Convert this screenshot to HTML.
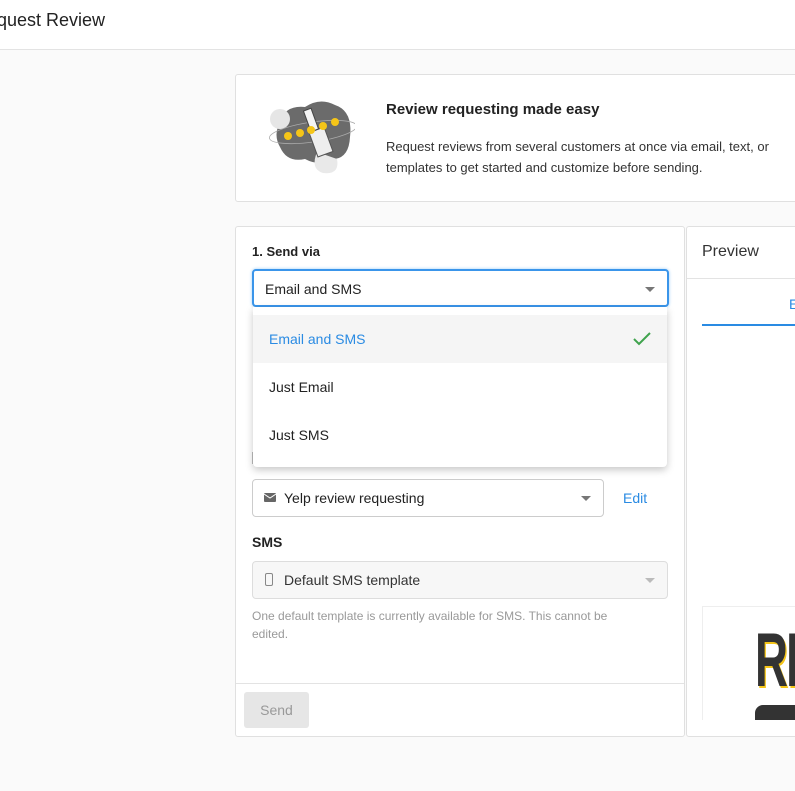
<!DOCTYPE html>
<html><head><meta charset="utf-8"><style>
*{box-sizing:border-box;margin:0;padding:0}
body{width:795px;height:791px;overflow:hidden;background:#fafafa;font-family:"Liberation Sans",sans-serif;color:#222;position:relative}
.hdr{position:absolute;left:0;top:0;width:795px;height:50px;background:#fff;border-bottom:1px solid #e3e3e3}
.hdr span{position:absolute;left:-3px;top:10px;font-size:18px;color:#222}
.card{position:absolute;background:#fff;border:1px solid #e0e0e0;border-radius:3px}
.abs{position:absolute}
.sel{position:absolute;border:1px solid #ccc;border-radius:4px;background:#fff;font-size:14px}
.caret{position:absolute;width:0;height:0;border-left:5px solid transparent;border-right:5px solid transparent;border-top:5px solid #777}
</style></head><body>
<div class="hdr"><span>quest Review</span></div>

<div class="card" style="left:235px;top:74px;width:580px;height:128px"></div>
<svg class="abs" style="left:265px;top:97px" width="90" height="82" viewBox="0 0 90 82">
<path d="M15 25 Q20 8 40 10 Q55 0 70 8 Q88 14 85 40 Q84 60 70 62 Q55 70 40 62 Q22 66 15 50 Q8 38 15 25Z" fill="#6b6b6b"/>
<circle cx="15" cy="22" r="10" fill="#e6e6e6"/>
<ellipse cx="48" cy="35" rx="44" ry="10" fill="none" stroke="#aaa" stroke-width="0.8" transform="rotate(-8 48 35)"/>
<path d="M52 55 Q45 72 58 76 Q75 78 72 62Z" fill="#e9e9e9"/>
<rect x="48" y="32" width="16" height="26" fill="#eee" stroke="#555" stroke-width="1" transform="rotate(-20 56 45)"/>
<rect x="42" y="12" width="8" height="22" fill="#f4f4f4" stroke="#444" stroke-width="1" transform="rotate(-20 46 23)"/>
<g fill="#f5c518"><circle cx="23" cy="39" r="4"/><circle cx="35" cy="36" r="4"/><circle cx="46" cy="33" r="4"/><circle cx="58" cy="29" r="4"/><circle cx="70" cy="25" r="4"/></g>
</svg>
<div class="abs" style="left:386px;top:101px;font-size:15px;font-weight:bold;color:#222">Review requesting made easy</div>
<div class="abs" style="left:386px;top:136px;font-size:13px;line-height:21px;color:#333;white-space:nowrap">Request reviews from several customers at once via email, text, or<br>templates to get started and customize before sending.</div>

<div class="card" style="left:235px;top:226px;width:450px;height:511px"></div>
<div class="abs" style="left:252px;top:244px;font-size:13px;font-weight:bold">1. Send via</div>
<div class="sel" style="left:252px;top:269px;width:417px;height:38px;border:2px solid #3a95ea;box-shadow:0 0 3px #9cccf5"><span class="abs" style="left:11px;top:10px">Email and SMS</span><div class="caret" style="left:391px;top:16px"></div></div>
<div class="abs" style="left:252px;top:332px;font-size:13px">:</div>
<div class="abs" style="left:252px;top:428px;font-size:13px">:</div>
<div class="abs" style="left:252px;top:452px;width:1px;height:12px;background:#bbb"></div>

<div class="abs" style="left:253px;top:307px;width:414px;height:160px;background:#fff;border-radius:0 0 4px 4px;box-shadow:0 3px 8px rgba(0,0,0,0.22)">
<div class="abs" style="left:0;top:8px;width:414px;height:48px;background:#f5f5f5"></div>
<div class="abs" style="left:16px;top:24px;font-size:14px;color:#2a8be3">Email and SMS</div>
<svg class="abs" style="left:379px;top:24px" width="20" height="16"><path d="M2 8 L7 13 L18 2" fill="none" stroke="#3fa34d" stroke-width="2"/></svg>
<div class="abs" style="left:16px;top:72px;font-size:14px">Just Email</div>
<div class="abs" style="left:16px;top:120px;font-size:14px">Just SMS</div>
</div>

<div class="sel" style="left:252px;top:479px;width:352px;height:38px"><svg class="abs" style="left:11px;top:13px" width="12" height="9"><rect width="12" height="9" rx="1" fill="#666"/><path d="M0 1 L6 5 L12 1" fill="none" stroke="#fff" stroke-width="1"/></svg><span class="abs" style="left:31px;top:10px">Yelp review requesting</span><div class="caret" style="left:328px;top:16px"></div></div>
<div class="abs" style="left:623px;top:490px;font-size:14px;color:#2a8be3">Edit</div>
<div class="abs" style="left:252px;top:534px;font-size:14px;font-weight:bold">SMS</div>
<div class="sel" style="left:252px;top:561px;width:416px;height:38px;background:#f7f7f7;border-color:#ddd"><svg class="abs" style="left:12px;top:11px" width="8" height="13"><rect x="0.5" y="0.5" width="7" height="12" rx="1.5" fill="none" stroke="#888"/></svg><span class="abs" style="left:31px;top:10px;color:#333">Default SMS template</span><div class="caret" style="left:392px;top:16px;border-top-color:#bbb"></div></div>
<div class="abs" style="left:252px;top:607px;font-size:12px;line-height:18px;color:#999;width:385px">One default template is currently available for SMS. This cannot be edited.</div>
<div class="abs" style="left:236px;top:683px;width:448px;height:1px;background:#e3e3e3"></div>
<div class="abs" style="left:244px;top:692px;width:65px;height:36px;background:#e6e6e6;border-radius:3px;color:#999;font-size:14px;text-align:center;line-height:36px">Send</div>

<div class="card" style="left:686px;top:226px;width:130px;height:511px"></div>
<div class="abs" style="left:702px;top:243px;font-size:16px;color:#333">Preview</div>
<div class="abs" style="left:687px;top:278px;width:108px;height:1px;background:#e3e3e3"></div>
<div class="abs" style="left:789px;top:296px;font-size:14px;color:#2a8be3">E</div>
<div class="abs" style="left:702px;top:324px;width:93px;height:2px;background:#2a8be3"></div>
<div class="abs" style="left:702px;top:606px;width:93px;height:114px;border:1px solid #eee;border-right:none;border-bottom:none;overflow:hidden">
<div class="abs" style="left:52px;top:10px;font-size:76px;font-weight:bold;color:#333;text-shadow:2px 2px 0 #f5c518;letter-spacing:-3px;transform:scaleX(0.6);transform-origin:left">RE</div>
<div class="abs" style="left:52px;top:98px;width:60px;height:30px;background:#333;border-radius:8px"></div>
</div>
</body></html>
